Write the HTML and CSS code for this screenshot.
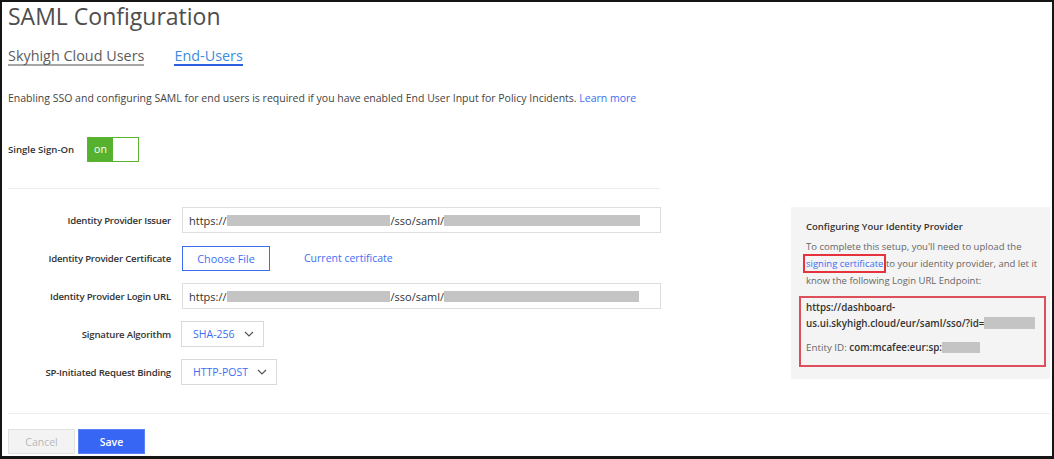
FILE: index.html
```html
<!DOCTYPE html>
<html>
<head>
<meta charset="utf-8">
<link rel="stylesheet" href="styles.css">
</head>
<body>
<div class="frame">
  <h1 class="title">SAML Configuration</h1>
  <div class="tabs">
    <span class="tab">Skyhigh Cloud Users</span>
    <span class="tab tab-active">End-Users</span>
  </div>
  <p class="desc">Enabling SSO and configuring SAML for end users is required if you have enabled End User Input for Policy Incidents. <a class="link">Learn more</a></p>
  <div class="sso">
    <span class="label-bold">Single Sign-On</span>
    <span class="toggle"><span class="toggle-on">on</span><span class="toggle-off"></span></span>
  </div>
  <div class="body">
    <div class="left">
      <div class="divider"></div>
      <div class="form">
        <div class="row">
          <label class="lbl">Identity Provider Issuer</label>
          <div class="field">https://<span class="redact r1"></span>/sso/saml/<span class="redact r2"></span></div>
        </div>
        <div class="row">
          <label class="lbl">Identity Provider Certificate</label>
          <div class="cert"><span class="btn-file">Choose File</span><a class="link cur">Current certificate</a></div>
        </div>
        <div class="row">
          <label class="lbl">Identity Provider Login URL</label>
          <div class="field">https://<span class="redact r1"></span>/sso/saml/<span class="redact r3"></span></div>
        </div>
        <div class="row">
          <label class="lbl">Signature Algorithm</label>
          <div><span class="select sel-sha">SHA-256<svg class="chev" width="10" height="6" viewBox="0 0 10 6"><path d="M1 1 L5 5 L9 1" fill="none" stroke="#555" stroke-width="1.2"/></svg></span></div>
        </div>
        <div class="row">
          <label class="lbl">SP-Initiated Request Binding</label>
          <div><span class="select sel-http">HTTP-POST<svg class="chev" width="10" height="6" viewBox="0 0 10 6"><path d="M1 1 L5 5 L9 1" fill="none" stroke="#555" stroke-width="1.2"/></svg></span></div>
        </div>
      </div>
    </div>
    <div class="panel">
      <div class="panel-title">Configuring Your Identity Provider</div>
      <p class="panel-text">To complete this setup, you'll need to upload the<br><a class="link boxed">signing certificate</a> to your identity provider, and let it<br>know the following Login URL Endpoint:</p>
      <div class="endpoint">
        <div class="strong">https://dashboard-<br>us.ui.skyhigh.cloud/eur/saml/sso/?id=<span class="redact r4"></span></div>
        <div class="entity">Entity ID: <span class="strong">com:mcafee:eur:sp:</span><span class="redact r5"></span></div>
      </div>
    </div>
  </div>
  <div class="footer">
    <span class="btn btn-cancel">Cancel</span>
    <span class="btn btn-save">Save</span>
  </div>
</div>
</body>
</html>
```
FILE: styles.css
```css
html, body { margin: 0; padding: 0; background: #fff; }
body { font-family: "Open Sans", "Liberation Sans", sans-serif; color: #444; }
.frame {
  width: 1054px; height: 459px; box-sizing: border-box;
  border-style: solid; border-color: #151515; border-width: 2px 2px 3px 2px;
  padding: 0 2px 0 6px; overflow: hidden;
}
.title { margin: 0; font-size: 23px; line-height: 28px; font-weight: 400; color: #4d4d4d; }
.tabs { margin-top: 17px; display: flex; gap: 30px; }
.tab { font-size: 14.4px; line-height: 17px; color: #5c5c5c; border-bottom: 2px solid #a6a6a6; }
.tab-active { color: #3c8ce0; border-bottom-color: #2d5fe3; }
.desc { margin: 24px 0 0; font-size: 10.5px; line-height: 16px; color: #444; }
.link { color: #3d6ef2; text-decoration: none; }
.sso { margin-top: 30px; display: flex; align-items: center; height: 26px; }
.label-bold { font-size: 9.6px; font-weight: 600; color: #333; width: 79px; }
.toggle { display: flex; width: 52px; height: 25px; box-sizing: border-box; border: 1px solid #5cb531; }
.toggle-on { width: 25px; background: #56b22e; color: #fff; font-size: 10.5px; display: flex; align-items: center; justify-content: center; }
.toggle-off { flex: 1; background: #fff; }
.body { display: flex; margin-top: 26px; }
.left { width: 652px; }
.divider { height: 1px; background: #ececec; }
.form { margin-top: 18px; display: flex; flex-direction: column; gap: 12px; }
.row { display: grid; grid-template-columns: 163px 1fr; column-gap: 11px; align-items: center; height: 26px; }
.lbl { text-align: right; font-size: 9.6px; letter-spacing: -0.2px; font-weight: 600; color: #333; }
.field {
  width: 479px; height: 26px; box-sizing: border-box; border: 1px solid #dedede;
  display: flex; align-items: center; padding-left: 6px; font-size: 11px; color: #333;
}
.redact { display: inline-block; height: 11px; background: #c4c4c4; }
.r1 { width: 163px; margin-right: 1px; }
.r2 { width: 196px; }
.r3 { width: 195px; }
.r4 { width: 51px; height: 12px; vertical-align: -2px; }
.r5 { width: 38px; height: 11px; vertical-align: -2px; }
.cert { display: flex; align-items: center; }
.btn-file {
  width: 88px; height: 25px; box-sizing: border-box; border: 1px solid #3d6ef2;
  color: #3d6ef2; font-size: 10.8px; display: flex; align-items: center; justify-content: center;
}
.cur { margin-left: 34px; font-size: 10.5px; }
.select {
  display: inline-flex; align-items: center; height: 26px; box-sizing: border-box;
  border: 1px solid #d9d9d9; color: #3d6ef2; font-size: 10.5px; padding-left: 11px; margin-left: -1px;
}
.sel-sha { width: 83px; }
.sel-http { width: 96px; }
.chev { margin-left: 9px; }
.panel {
  margin-left: auto; margin-top: 19px; width: 259px; height: 172px; box-sizing: border-box;
  background: #f4f4f4; padding: 12px 4px 0 8px; font-size: 9.5px;
}
.panel-title { padding-left: 7px; font-weight: 600; color: #333; line-height: 16px; }
.panel-text { margin: 3px 0 0; padding-left: 7px; line-height: 17px; color: #666; }
.boxed { outline: 2px solid #e5323d; outline-offset: 1px; }
.endpoint {
  margin-top: 7px; border: 2px solid #dc4f5b; height: 71px; box-sizing: border-box;
  padding: 2px 0 0 5px; color: #666; line-height: 16px; font-size: 9.8px;
}
.strong { font-weight: 600; color: #333; }
.entity { margin-top: 8px; }
.footer {
  margin-top: 28px; border-top: 1px solid #ececec; padding-top: 15px; display: flex; gap: 3px;
}
.btn {
  width: 67px; height: 25px; box-sizing: border-box; display: flex; align-items: center;
  justify-content: center; font-size: 10.5px;
}
.btn-cancel { background: #f3f3f3; border: 1px solid #e2e2e2; color: #b8b8b8; }
.btn-save { background: #3866f4; border: 1px solid #5a82f5; color: #fff; font-weight: 600; }
```
